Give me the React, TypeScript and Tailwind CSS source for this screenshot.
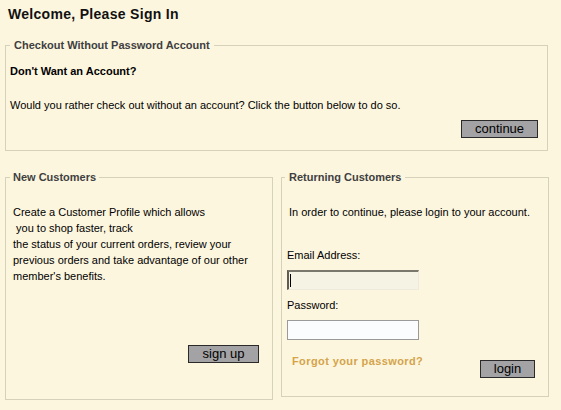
import React from "react";

const font = { fontFamily: '"Liberation Sans", Arial, sans-serif' };

export default function App() {
  return (
    <div
      className="w-[561px] h-[410px] bg-[#fdf6df] text-[11px] leading-[14px] text-black overflow-hidden"
      style={font}
    >
      <h1 className="pl-[8px] pt-[6px] h-[38px] text-[14px] leading-[17px] font-bold tracking-[0.3px] text-[#111]">
        Welcome, Please Sign In
      </h1>

      <fieldset className="ml-[5px] w-[543px] h-[113px] border border-[#d6d1bb] px-[4px] pt-0 pb-0 flex flex-col">
        <legend className="px-[4px] font-bold text-[#404040] leading-[14px]">
          Checkout Without Password Account
        </legend>
        <p className="mt-[12px] font-bold">Don't Want an Account?</p>
        <p className="mt-[20px]">
          Would you rather check out without an account? Click the button below to do so.
        </p>
        <div className="mt-[8px] flex justify-end pr-[5px]">
          <button className="w-[77px] h-[18px] bg-[#a3a3a5] border border-[#2a2a2a] text-[13px] leading-[16px] text-black">
            continue
          </button>
        </div>
      </fieldset>

      <div className="mt-[19px] flex gap-[8px] pl-[5px] items-start">
        <fieldset className="w-[268px] h-[230px] border border-[#d6d1bb] pl-[7px] pr-[13px] flex flex-col">
          <legend className="ml-[-3px] px-[3px] font-bold text-[#404040] leading-[14px]">
            New Customers
          </legend>
          <p className="mt-[20px] leading-[16px]">
            Create a Customer Profile which allows
            <br />
            &nbsp;you to shop faster, track
            <br />
            the status of your current orders, review your
            <br />
            previous orders and take advantage of our other
            <br />
            member's benefits.
          </p>
          <div className="mt-[61px] flex justify-end">
            <button className="w-[71px] h-[18px] bg-[#a3a3a5] border border-[#2a2a2a] text-[13px] leading-[16px] text-black">
              sign up
            </button>
          </div>
        </fieldset>

        <fieldset className="w-[268px] h-[227px] border border-[#d6d1bb] pl-[5px] pr-[12px] flex flex-col">
          <legend className="ml-[-2px] px-[4px] font-bold text-[#404040] leading-[14px]">
            Returning Customers
          </legend>
          <p className="mt-[21px] pl-[2px]">In order to continue, please login to your account.</p>
          <label className="mt-[29px] block">Email Address:</label>
          <div className="relative mt-[8px] w-[132px] h-[20px]">
            <input
              type="text"
              className="w-[132px] h-[20px] bg-[#f5f3e3] border-t-2 border-l-2 border-r border-b border-t-[#7a776c] border-l-[#5e5b52] border-r-[#eeeadb] border-b-[#eeeadb] outline-none"
            />
            <span className="absolute left-[3px] top-[4px] w-[1px] h-[13px] bg-black" />
          </div>
          <label className="mt-[8px] block">Password:</label>
          <input
            type="password"
            className="mt-[8px] w-[132px] h-[20px] bg-[#fbfcfd] border border-[#9a9a9a] outline-none"
          />
          <div className="mt-[20px] flex items-start justify-between">
            <a
              href="#"
              className="ml-[5px] mt-[-6px] font-bold text-[#d4a44a] tracking-[0.4px] no-underline"
            >
              Forgot your password?
            </a>
            <button className="w-[55px] h-[18px] bg-[#a3a3a5] border border-[#2a2a2a] text-[13px] leading-[16px] text-black mr-[1px]">
              login
            </button>
          </div>
        </fieldset>
      </div>
    </div>
  );
}
